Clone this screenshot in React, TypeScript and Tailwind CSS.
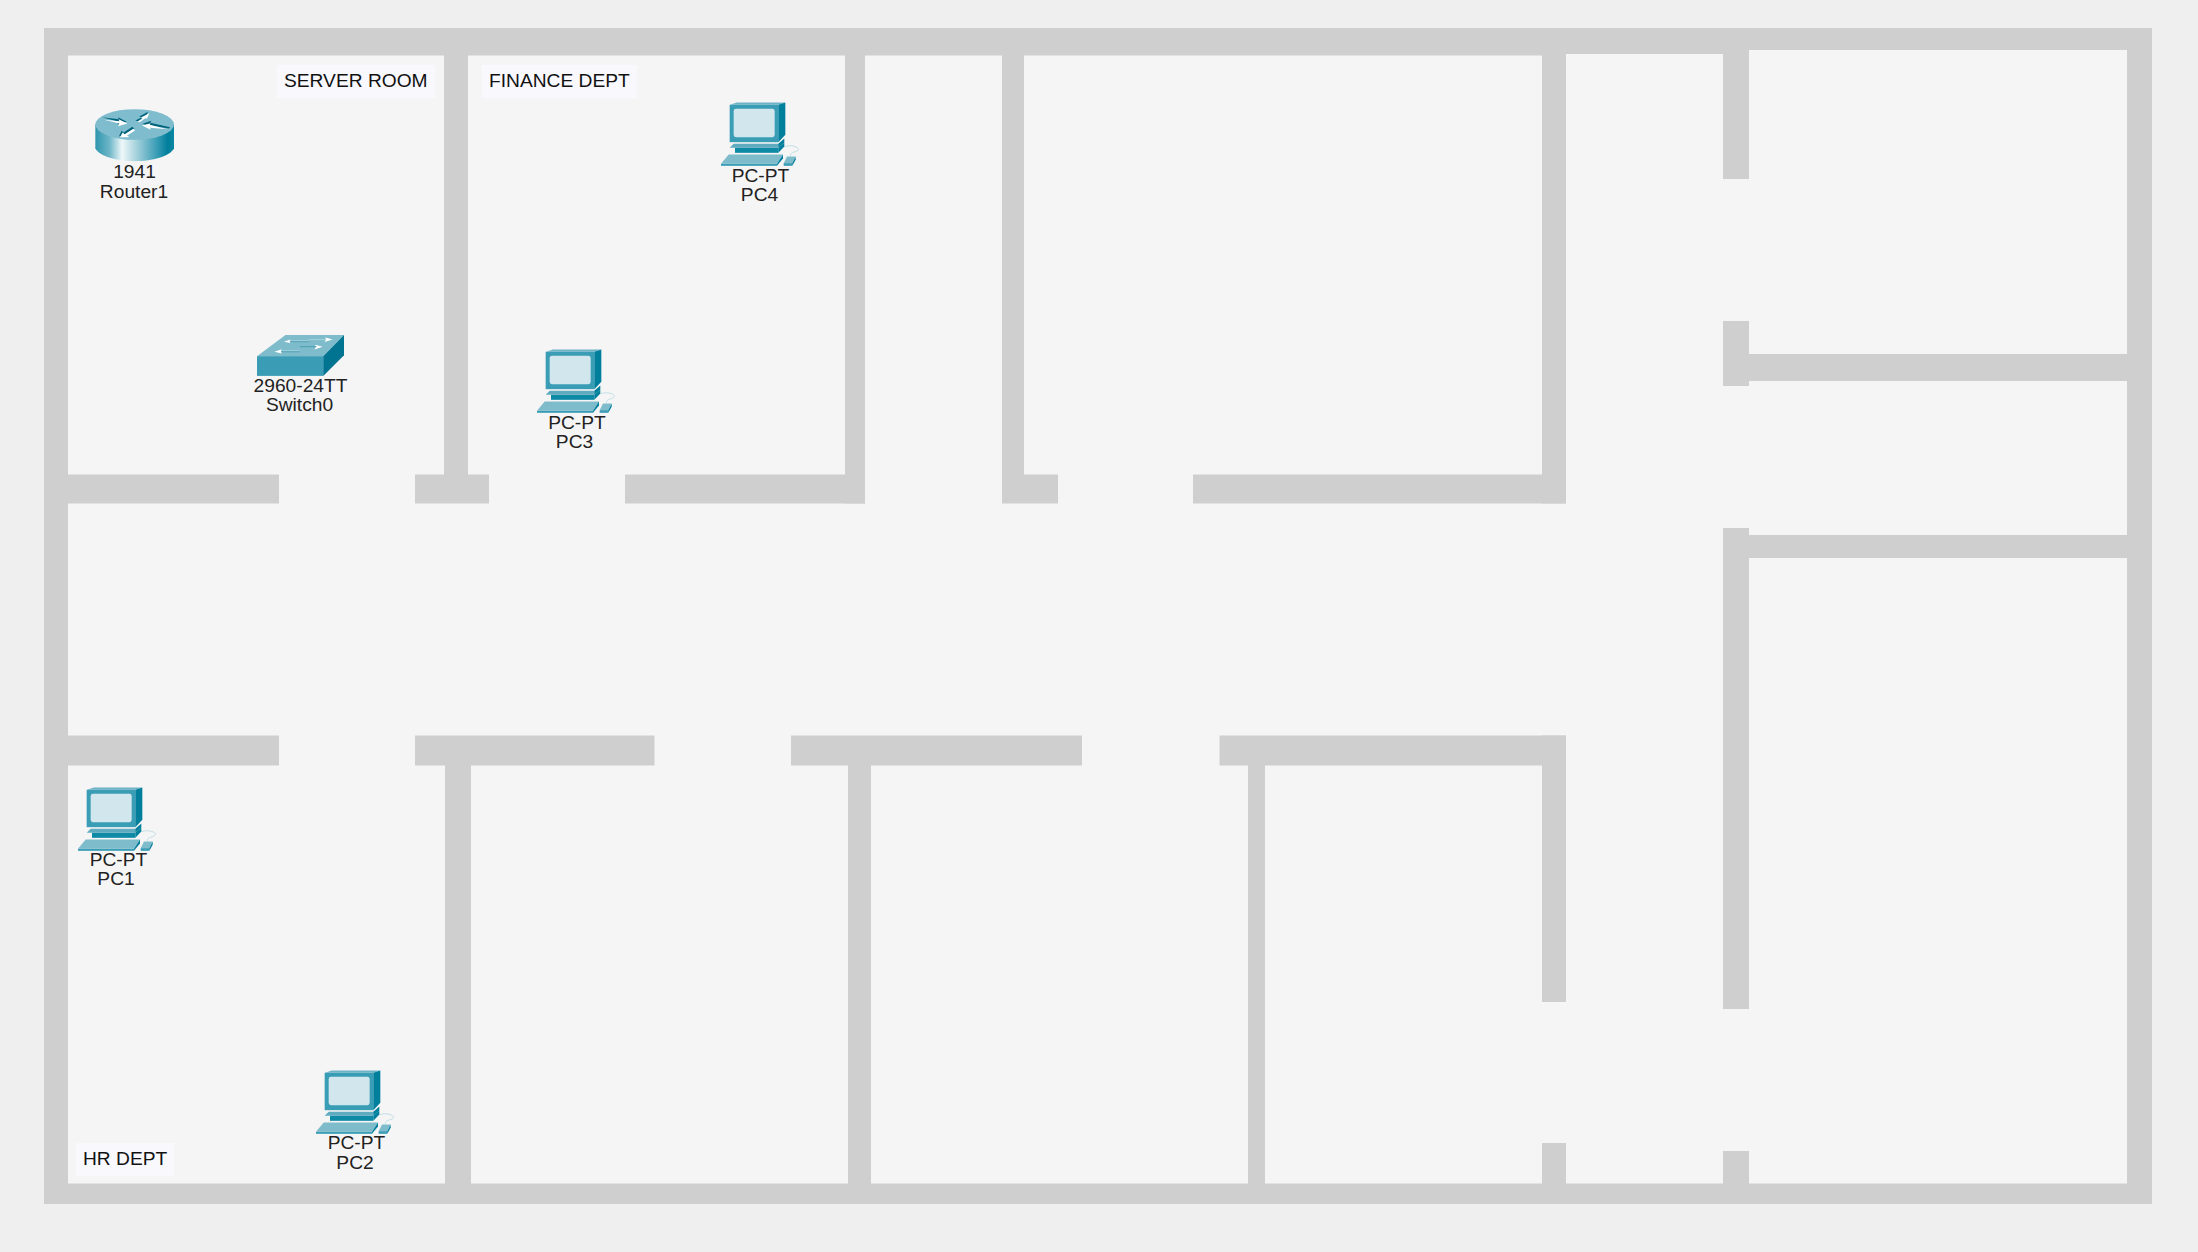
const walls: [number, number, number, number][] = [
  [44, 28, 1522, 27.5],
  [1566, 28, 157, 26],
  [1723, 28, 429, 22],
  [44, 28, 24, 1176],
  [2127, 28, 25, 1176],
  [44, 1183.5, 2108, 20.5],
  [444, 55, 24, 448],
  [68, 474.5, 211, 29],
  [415, 474.5, 74, 29],
  [625, 474.5, 240, 29],
  [845, 55, 20, 448.5],
  [1002, 55, 22, 448],
  [1002, 474.5, 56, 29],
  [1193, 474.5, 373, 29],
  [1542, 55, 24, 448.5],
  [1723, 28, 26, 151],
  [1723, 321, 26, 65],
  [1749, 354, 378, 27],
  [1723, 528, 26, 481],
  [1749, 535, 378, 23],
  [1723, 1151, 26, 40],
  [68, 735.5, 211, 30],
  [415, 735.5, 239.5, 30],
  [791, 735.5, 291, 30],
  [1219.5, 735.5, 346.5, 30],
  [445, 765, 26, 425],
  [848, 765, 23, 425],
  [1248, 765, 17, 425],
  [1542, 735.5, 24, 266.5],
  [1542, 1143, 24, 45],
];

function PcIcon() {
  return (
    <svg viewBox="32 37 234 191" className="block w-[78px] h-[64px] shrink-0 blur-[0.3px]">
      <polygon points="58,45 80,38 225,38 204,45" fill="#6db2c6" />
      <rect x="58" y="45" width="146" height="112" fill="#3a9db6" />
      <polygon points="204,45 225,38 225,135 204,157" fill="#007f9c" />
      <rect x="70" y="57" width="123" height="85" rx="7" fill="#d2e6ee" />
      <polygon points="58,174 70,162 204,162 204,174" fill="#5fabc0" />
      <polygon points="204,162 222,146 222,158 204,174" fill="#007f9c" />
      <rect x="74" y="174" width="130" height="15" fill="#0f8aa6" />
      <polygon points="204,174 222,158 222,170 204,189" fill="#007f9c" />
      <polygon points="32,222 55,194 218,194 200,222" fill="#7fbccb" />
      <rect x="32" y="222" width="168" height="6" fill="#3a9db6" />
      <polygon points="200,222 218,194 218,206 200,228" fill="#007f9c" />
      <path d="M224 170 C245 164 268 172 264 180 C260 188 240 184 240 198" fill="none" stroke="#a9d3de" strokeWidth="2" />
      <polygon points="220,220 230,200 256,200 246,220" fill="#7fbccb" />
      <polygon points="220,220 246,220 246,228 220,228" fill="#3a9db6" />
      <polygon points="246,220 256,200 256,210 246,228" fill="#007f9c" />
    </svg>
  );
}

function RouterIcon() {
  return (
    <svg viewBox="45 60 237 158" className="block w-[79px] h-[53px] shrink-0 blur-[0.3px]">
      <defs>
        <linearGradient id="routerBody" x1="0" x2="1" y1="0" y2="0">
          <stop offset="0" stopColor="#2f96ae" />
          <stop offset="0.18" stopColor="#6db6c7" />
          <stop offset="0.34" stopColor="#eef8fa" />
          <stop offset="0.52" stopColor="#a6d2dc" />
          <stop offset="0.78" stopColor="#3a9db6" />
          <stop offset="0.92" stopColor="#007f9c" />
          <stop offset="1" stopColor="#0a87a2" />
        </linearGradient>
      </defs>
      <path d="M46 106 L46 178 C60 202 110 216 164 216 C218 216 268 202 282 178 L282 106 Z" fill="url(#routerBody)" />
      <ellipse cx="164" cy="106" rx="118" ry="46" fill="#7fbccd" />
      <polygon points="68,88 118,94 116,88 142,102 114,110 118,102" fill="#00637c" transform="translate(-2,-4)" />
      <polygon points="72,92 118,96 116,90 142,103 114,111 118,103" fill="#ffffff" />
      <polygon points="170,96 188,87 182,84 208,70 201,88 195,85 178,98" fill="#00637c" transform="translate(-4,-2)" />
      <polygon points="172,98 188,89 183,85 208,72 201,88 196,87 179,99" fill="#ffffff" />
      <polygon points="186,108 212,99 209,105 268,118 266,122 210,113 212,119" fill="#00637c" transform="translate(2,-4)" />
      <polygon points="186,109 212,102 209,107 262,120 210,116 212,122" fill="#ffffff" />
      <polygon points="120,144 128,128 134,133 160,116 166,122 142,138 148,144" fill="#00637c" transform="translate(-3,-3)" />
      <polygon points="120,144 128,130 134,135 160,119 165,124 142,139 148,144" fill="#ffffff" />
    </svg>
  );
}

function SwitchIcon() {
  return (
    <svg viewBox="50 45 260 122" className="block w-[87px] h-[41px] shrink-0 blur-[0.3px]">
      <polygon points="50,108 135,45 310,45 248,108" fill="#7fbccb" />
      <rect x="50" y="108" width="198" height="59" fill="#3a9db5" />
      <polygon points="248,108 310,45 310,105 248,167" fill="#007490" />
      <polygon points="130,65 150,58 148,62 150,69" fill="#ffffff" />
      <rect x="148" y="61" width="58" height="3" fill="#b5dbe4" />
      <rect x="148" y="64" width="58" height="2" fill="#2f8ea6" />
      <polygon points="102,95 124,87 122,92 124,100" fill="#ffffff" />
      <rect x="122" y="91" width="56" height="3" fill="#b5dbe4" />
      <rect x="122" y="94" width="56" height="2" fill="#2f8ea6" />
      <polygon points="276,58 254,52 256,58 252,66" fill="#ffffff" />
      <rect x="206" y="57" width="50" height="2" fill="#b5dbe4" />
      <polygon points="246,80 224,74 226,80 222,88" fill="#ffffff" />
      <rect x="178" y="79" width="50" height="2" fill="#2f8ea6" />
    </svg>
  );
}

const nodes = [
  { pos: "left-[74px] top-[109px]", icon: <RouterIcon />, a: "1941", b: "Router1", ca: "ml-[1px]", cb: "ml-0 mt-[1px]", gap: "mt-0" },
  { pos: "left-[240px] top-[335px]", icon: <SwitchIcon />, a: "2960-24TT", b: "Switch0", ca: "ml-[1px]", cb: "-ml-[1px]", gap: "mt-0" },
  { pos: "left-[700px] top-[102px]", icon: <PcIcon />, a: "PC-PT", b: "PC4", ca: "ml-[1px]", cb: "-ml-[1px]", gap: "mt-0" },
  { pos: "left-[516px] top-[349px]", icon: <PcIcon />, a: "PC-PT", b: "PC3", ca: "ml-[2px]", cb: "-ml-[3px]", gap: "mt-0" },
  { pos: "left-[57px] top-[787px]", icon: <PcIcon />, a: "PC-PT", b: "PC1", ca: "ml-[3px]", cb: "-ml-[2px]", gap: "-mt-[1px]" },
  { pos: "left-[295px] top-[1070px]", icon: <PcIcon />, a: "PC-PT", b: "PC2", ca: "ml-[3px]", cb: "ml-0 mt-[1px]", gap: "-mt-[1px]" },
];

const rooms = [
  { pos: "left-[277px] top-[65px]", name: "SERVER ROOM" },
  { pos: "left-[482px] top-[65px]", name: "FINANCE DEPT" },
  { pos: "left-[76px] top-[1143px]", name: "HR DEPT" },
];

export default function App() {
  return (
    <div className="relative w-[2198px] h-[1252px] overflow-hidden bg-[#efefef] [font-family:'Liberation_Sans',Arial,sans-serif]">
      <svg viewBox="0 0 2198 1252" className="absolute inset-0 w-[2198px] h-[1252px]">
        <defs>
          <filter id="soft" x="-1%" y="-1%" width="102%" height="102%">
            <feGaussianBlur stdDeviation="0.5" />
          </filter>
        </defs>
        <rect x="44" y="28" width="2108" height="1176" fill="#f5f5f5" />
        <g fill="#cfcfcf" filter="url(#soft)">
          {walls.map(([x, y, w, h], i) => (
            <rect key={i} x={x} y={y} width={w} height={h} />
          ))}
        </g>
      </svg>

      {rooms.map((r) => (
        <div
          key={r.name}
          className={`absolute ${r.pos} h-[33px] px-[7px] pb-[2px] flex items-center bg-[#f8f8fd] text-[19.2px] leading-[19px] text-[#111111] whitespace-nowrap`}
        >
          {r.name}
        </div>
      ))}

      {nodes.map((n) => (
        <div key={n.b} className={`absolute ${n.pos} w-[120px] flex flex-col items-center text-[19.2px] leading-[19px] text-[#222222] whitespace-nowrap`}>
          {n.icon}
          <span className={`${n.gap} ${n.ca}`}>{n.a}</span>
          <span className={n.cb}>{n.b}</span>
        </div>
      ))}
    </div>
  );
}
